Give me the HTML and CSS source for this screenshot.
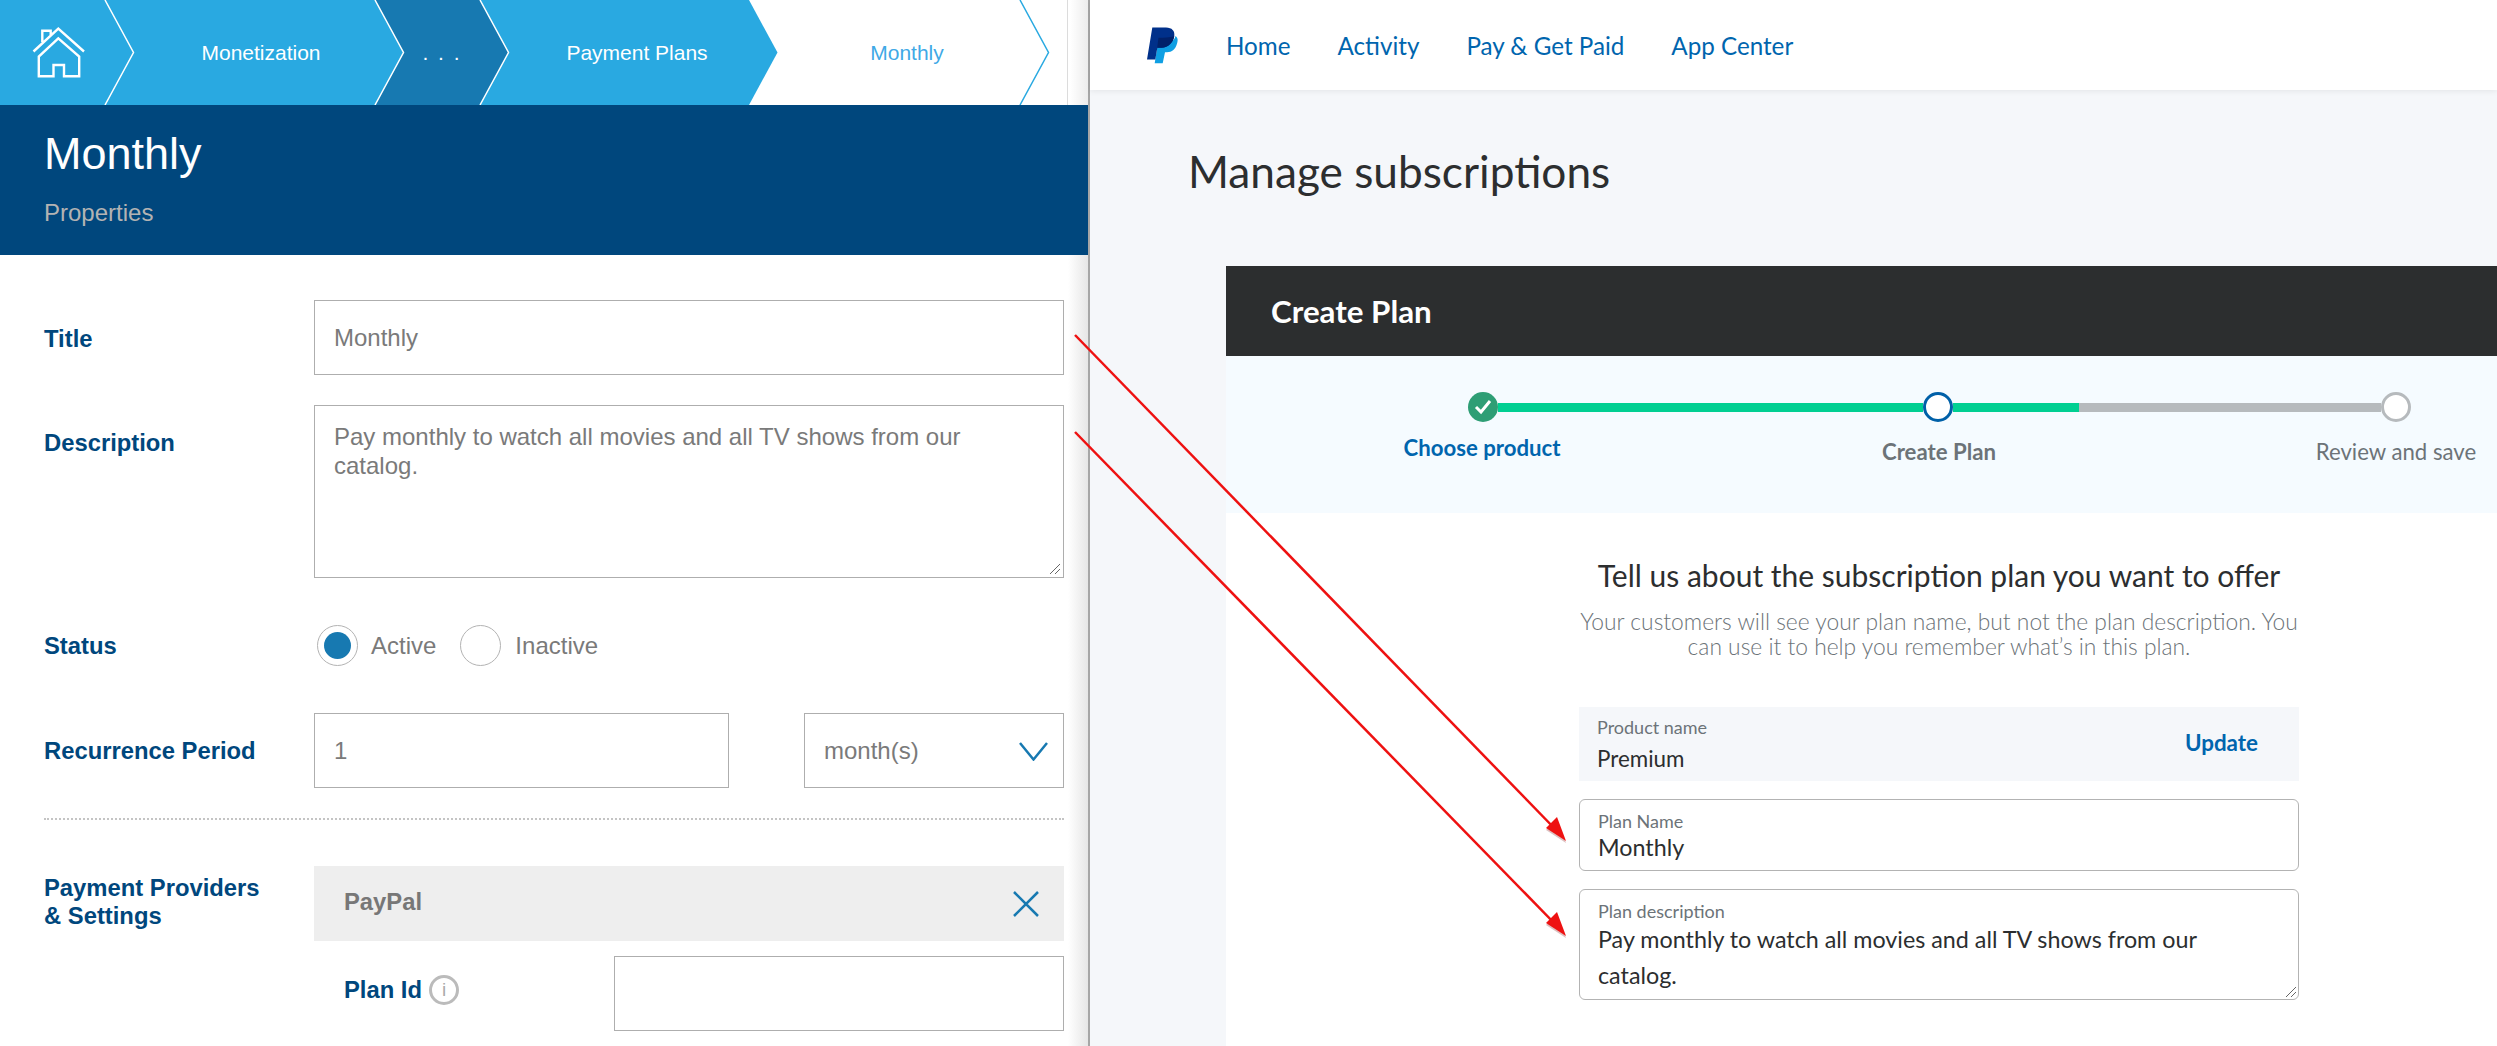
FILE: index.html
```html
<!DOCTYPE html>
<html lang="en">
<head>
<meta charset="utf-8">
<title>Monthly plan</title>
<link rel="stylesheet" href="styles.css">
</head>
<body>
<div class="page">
  <section class="left">
    <nav class="crumbs">
      <svg class="crumb-bg" width="1067" height="105" viewBox="0 0 1067 105">
        <polygon class="c-light" points="0,0 749,0 777.500,52.500 749,105 0,105"/>
        <polygon class="c-dark" points="375,0 480,0 508.500,52.500 480,105 375,105 403.500,52.500"/>
        <polyline class="c-line" points="105,0 133.500,52.500 105,105"/>
        <polyline class="c-line" points="375,0 403.500,52.500 375,105"/>
        <polyline class="c-line" points="480,0 508.500,52.500 480,105"/>
        <polyline class="c-line-blue" points="1020,0 1048.500,52.500 1020,105"/>
      </svg>
      <a class="crumb crumb-home">
        <svg class="home-icon" width="60" height="60" viewBox="29 23 60 60">
          <path d="M33.500 51.500 L58.300 28.500 L84 51.500 M42.300 42 V30.800 H50.700 V36"/>
          <path d="M38.800 56.500 V76.300 H53.500 V65 H64 V76.300 H79.200 V56.500 L58.300 38.300 Z"/>
        </svg>
      </a>
      <a class="crumb crumb-mon">Monetization</a>
      <a class="crumb crumb-dots">. . .</a>
      <a class="crumb crumb-pay">Payment Plans</a>
      <a class="crumb crumb-cur">Monthly</a>
    </nav>
    <header class="head">
      <h1 class="head-title">Monthly</h1>
      <p class="head-sub">Properties</p>
    </header>
    <form class="form">
      <div class="row row-title">
        <div class="label">Title</div>
        <div class="field field-title">Monthly</div>
      </div>
      <div class="row row-desc">
        <div class="label label-desc">Description</div>
        <div class="field field-desc">Pay monthly to watch all movies and all TV shows from our catalog.
          <svg class="grip" width="12" height="12" viewBox="0 0 12 12"><path d="M1 11 L11 1 M6 11 L11 6"/></svg>
        </div>
      </div>
      <div class="row row-status">
        <div class="label">Status</div>
        <div class="radios">
          <span class="radio radio-on"><span class="radio-dot"></span></span>
          <span class="radio-text radio-text-a">Active</span>
          <span class="radio"></span>
          <span class="radio-text">Inactive</span>
        </div>
      </div>
      <div class="row row-rec">
        <div class="label">Recurrence Period</div>
        <div class="rec">
          <div class="field field-num">1</div>
          <div class="field field-select">month(s)
            <svg class="select-chev" width="29" height="19" viewBox="0 0 29 19"><path d="M1 1 L14.500 17.500 L28 1"/></svg>
          </div>
        </div>
      </div>
      <div class="divider"></div>
      <div class="row row-prov">
        <div class="label label-prov">Payment Providers<br>&amp; Settings</div>
        <div class="prov">
          <div class="prov-head">
            <span class="prov-name">PayPal</span>
            <svg class="prov-x" width="26" height="26" viewBox="0 0 26 26"><path d="M1 1 L25 25 M25 1 L1 25"/></svg>
          </div>
          <div class="plan-row">
            <div class="plan-label">Plan Id
              <span class="info">i</span>
            </div>
            <div class="field field-plan"></div>
          </div>
        </div>
      </div>
    </form>
  </section>

  <section class="right">
    <div class="topnav">
      <svg class="pp-logo" width="33" height="37" viewBox="0 -0.500 33 37">
        <path class="pp-light" d="M12 15 H20 C26 15 28.500 12.500 29.500 8.500 C32 10 32 13 31.200 15.500 C29.500 22 26 24.700 21 24.700 H19 L16.700 35.700 H8.700 Z"/>
        <path class="pp-dark" d="M6.300 0 H20 C26 0 29 3.500 28.300 8.500 C27.500 15 22 20.300 15.700 20.300 H11.300 L9.300 32 H1 Z"/>
        <path class="pp-deep" d="M12.500 10.300 C18 10.300 24 10 28.200 8.800 C27.300 15 22 20.300 15.700 20.300 H11.300 L10.800 23 Z"/>
      </svg>
      <a class="nav-link">Home</a>
      <a class="nav-link">Activity</a>
      <a class="nav-link">Pay &amp; Get Paid</a>
      <a class="nav-link">App Center</a>
    </div>
    <h2 class="manage">Manage subscriptions</h2>
    <div class="card">
      <div class="card-head">Create Plan</div>
      <div class="stepper">
        <div class="track">
          <span class="dot dot-done">
            <svg width="20" height="18" viewBox="0 0 20 18"><path d="M3 9 L8 14 L17 3"/></svg>
          </span>
          <span class="seg seg-a"></span>
          <span class="dot dot-cur"></span>
          <span class="seg seg-b"></span>
          <span class="seg seg-c"></span>
          <span class="dot dot-next"></span>
        </div>
        <div class="step-labels">
          <span class="step step-done">Choose product</span>
          <span class="step step-cur">Create Plan</span>
          <span class="step">Review and save</span>
        </div>
      </div>
      <div class="plan-form">
        <h3 class="plan-title">Tell us about the subscription plan you want to offer</h3>
        <p class="plan-note">Your customers will see your plan name, but not the plan description. You can use it to help you remember what’s in this plan.</p>
        <div class="product">
          <div>
            <div class="mini">Product name</div>
            <div class="product-name">Premium</div>
          </div>
          <a class="update">Update</a>
        </div>
        <div class="box box-name">
          <div class="mini">Plan Name</div>
          <div class="box-val">Monthly</div>
        </div>
        <div class="box box-desc">
          <div class="mini">Plan description</div>
          <div class="box-val box-val-desc">Pay monthly to watch all movies and all TV shows from our catalog.</div>
          <svg class="grip grip-r" width="12" height="12" viewBox="0 0 12 12"><path d="M1 11 L11 1 M6 11 L11 6"/></svg>
        </div>
      </div>
    </div>
  </section>

  <svg class="arrows" width="2497" height="1046" viewBox="0 0 2497 1046">
    <path class="arrow-line" d="M1075 335 L1558 832"/>
    <polygon class="arrow-shadow" points="1566,843 1546,830 1557,819"/>
    <polygon class="arrow-head" points="1566,841 1546,828 1557,817"/>
    <path class="arrow-line" d="M1075 432 L1558 927"/>
    <polygon class="arrow-shadow" points="1566,938 1546,925 1557,914"/>
    <polygon class="arrow-head" points="1566,936 1546,923 1557,912"/>
  </svg>
</div>
</body>
</html>
```
FILE: styles.css
```css
* { box-sizing: border-box; }
html, body { margin: 0; padding: 0; background: #fff; }
.page {
  position: relative;
  display: flex;
  width: 2497px;
  height: 1046px;
  overflow: hidden;
}

/* LEFT */
.left {
  display: flex;
  flex-direction: column;
  width: 1088px;
  flex: none;
  font-family: "Liberation Sans", Arial, sans-serif;
  background: #fff;
  height: 100%;
}
.crumbs {
  position: relative;
  display: flex;
  flex: none;
  height: 105px;
  align-items: center;
  font-size: 21px;
  color: #fff;
  background: linear-gradient(90deg, #fff 1070px, #ececec 1088px);
}
.crumb-bg { position: absolute; left: 0; top: 0; border-right: 1px solid #dcdcdc; width: 1068px; }
.c-light { fill: #29a9e1; }
.c-dark { fill: #1779b1; }
.c-line { fill: none; stroke: #fff; stroke-width: 1.5; }
.c-line-blue { fill: none; stroke: #29a9e1; stroke-width: 1.5; }
.crumb { position: relative; display: flex; justify-content: center; align-items: center; height: 100%; flex: none; }
.crumb-home { width: 118px; }
.crumb-mon { width: 286px; }
.crumb-dots { width: 76px; letter-spacing: 2px; }
.crumb-pay { width: 314px; }
.crumb-cur { width: 226px; color: #3fa9e6; }
.home-icon path { fill: none; stroke: #fff; stroke-width: 2.400; }

.head {
  flex: none;
  height: 150px;
  background: #00477d;
  padding: 22px 44px 0;
}
.head-title { margin: 0; font-size: 45px; font-weight: 400; line-height: 54px; color: #fff; }
.head-sub { margin: 18px 0 0; font-size: 24px; line-height: 28px; color: #b3b3b3; }

.form {
  flex: 1;
  padding: 45px 24px 0 44px;
  background: linear-gradient(90deg, #fff 1068px, #e6e6e6 1088px);
}
.row { display: flex; }
.label {
  width: 270px;
  flex: none;
  font-size: 23.800px;
  font-weight: 700;
  color: #00477d;
}
.field {
  border: 1px solid #aeaeae;
  font-size: 24px;
  color: #7a7a7a;
  background: #fff;
  padding: 0 19px;
}
.row-title { height: 75px; align-items: center; }
.row-title .label { padding-top: 2px; }
.field-title { flex: 1; height: 75px; line-height: 73px; }
.row-desc { margin-top: 30px; height: 173px; }
.label-desc { padding-top: 24px; line-height: 28px; }
.field-desc { position: relative; flex: 1; height: 173px; padding-top: 16px; line-height: 29px; }
.grip { position: absolute; right: 2px; bottom: 2px; }
.grip path { fill: none; stroke: #666; stroke-width: 1; }
.row-status { margin-top: 47px; height: 40px; align-items: center; }
.row-status .label { padding-top: 2px; }
.radios { display: flex; align-items: center; padding-left: 3px; font-size: 24px; color: #7a7a7a; }
.radio {
  display: flex;
  align-items: center;
  justify-content: center;
  width: 41px;
  height: 41px;
  border: 1px solid #b3b3b3;
  border-radius: 50%;
  background: #fff;
}
.radio-dot { width: 27px; height: 27px; border-radius: 50%; background: #1779b1; }
.radio-text { margin-left: 14px; padding-top: 2px; }
.radio-text-a { margin-left: 13px; margin-right: 24px; }
.row-rec { margin-top: 48px; height: 75px; align-items: center; }
.rec { flex: 1; display: flex; justify-content: space-between; }
.field-num { width: 415px; height: 75px; line-height: 73px; }
.field-select { position: relative; width: 260px; height: 75px; line-height: 73px; }
.select-chev { position: absolute; right: 15px; top: 28px; }
.select-chev path { fill: none; stroke: #1779b1; stroke-width: 2.500; }
.divider { margin-top: 30px; border-top: 2px dotted #c4c4c4; height: 2px; }
.row-prov { margin-top: 46px; }
.label-prov { padding-top: 8px; line-height: 28px; }
.prov { flex: 1; border-bottom: 1px solid #d0d0d0; padding-bottom: 15px; }
.prov-head {
  display: flex;
  justify-content: space-between;
  align-items: center;
  height: 75px;
  padding: 0 25px 0 30px;
  background: #eee;
  font-size: 23.800px;
  font-weight: 700;
  color: #777;
}
.prov-name { padding-bottom: 3px; }
.prov-x path { fill: none; stroke: #1779b1; stroke-width: 2.500; }
.plan-row { display: flex; margin-top: 15px; height: 75px; }
.plan-label {
  display: flex;
  align-items: center;
  gap: 7px;
  width: 300px;
  flex: none;
  padding: 0 0 7px 30px;
  font-size: 23.800px;
  font-weight: 700;
  color: #00477d;
}
.info {
  display: flex;
  align-items: center;
  justify-content: center;
  width: 30px;
  height: 30px;
  border: 3px solid #bbb;
  border-radius: 50%;
  font-size: 19px;
  font-weight: 400;
  color: #aaa;
}
.field-plan { flex: 1; height: 75px; }

/* RIGHT */
.right {
  flex: 1;
  min-width: 0;
  background: #f5f7fa;
  border-left: 2px solid #a6a6a6;
  font-family: "Lato", "Noto Sans", sans-serif;
  color: #2c2e2f;
  height: 100%;
}
.topnav {
  display: flex;
  align-items: center;
  height: 90px;
  padding-left: 56px;
  background: #fff;
  box-shadow: 0 1px 6px rgba(0, 0, 0, 0.08);
}
.pp-logo { margin-right: 47px; }
.pp-light { fill: #0f9fe3; }
.pp-dark { fill: #00308a; }
.pp-deep { fill: #012169; }
.nav-link { margin-right: 47px; font-size: 24.200px; color: #0065ae; }
.manage {
  margin: 0;
  padding: 52px 0 0 98px;
  height: 176px;
  font-size: 44.200px;
  font-weight: 400;
  line-height: 58px;
  color: #2c2e2f;
}
.card { margin-left: 136px; background: #fff; height: 780px; }
.card-head {
  height: 90px;
  padding-left: 45px;
  background: #2c2e2f;
  color: #fff;
  font-size: 31.300px;
  font-weight: 700;
  line-height: 90px;
}
.stepper { height: 157px; padding-top: 36px; background: #f5fbff; }
.track { display: flex; align-items: center; margin-left: 242px; height: 30px; width: 943px; }
.dot {
  flex: none;
  display: flex;
  align-items: center;
  justify-content: center;
  width: 30px;
  height: 30px;
  border-radius: 50%;
  background: #fff;
  border: 3px solid #0060a8;
}
.dot-done { background: #2e9e75; border: 0; }
.dot-done path { fill: none; stroke: #fff; stroke-width: 3; }
.dot-next { border-color: #b6babd; }
.seg { height: 9px; flex: none; }
.seg-a { width: 425px; background: #00cf92; }
.seg-b { width: 126px; background: #00cf92; }
.seg-c { width: 302px; background: #b6babd; }
.step-labels { display: flex; margin: 16px 0 0 156px; gap: 257px; font-size: 22.200px; color: #6c7378; }
.step { width: 200px; text-align: center; }
.step-done { color: #0065ae; font-weight: 700; margin-top: -4px; }
.step-cur { font-weight: 700; }
.plan-form { width: 720px; margin-left: 353px; padding-top: 44px; }
.plan-title { margin: 0; text-align: center; font-size: 30px; font-weight: 400; line-height: 36px; color: #2c2e2f; white-space: nowrap; }
.plan-note { margin: 16px -2px 0; text-align: center; font-size: 22.800px; font-weight: 300; line-height: 25px; color: #6c7378; }
.product {
  display: flex;
  justify-content: space-between;
  align-items: center;
  height: 74px;
  margin-top: 48px;
  padding: 0 41px 0 18px;
  background: #f5f7fa;
}
.mini { font-size: 18px; line-height: 22px; color: #6c7378; }
.product-name { margin-top: 8px; font-size: 22.400px; line-height: 26px; }
.update { font-size: 22.400px; font-weight: 700; color: #0065ae; padding-bottom: 3px; }
.box { position: relative; border: 1px solid #b3b3b3; border-radius: 6px; padding: 10px 17px 0 18px; background: #fff; }
.box-name { height: 72px; margin-top: 18px; }
.box-desc { height: 111px; margin-top: 18px; }
.box-val { font-size: 23.300px; line-height: 30px; }
.box-val-desc { line-height: 36px; margin-top: -1px; padding-right: 40px; }
.box-name .box-val { margin-top: 0; }
.grip-r { right: 1px; bottom: 1px; }

.arrows { position: absolute; left: 0; top: 0; pointer-events: none; }
.arrow-line { fill: none; stroke: #ee1111; stroke-width: 2.500; }
.arrow-head { fill: #ee1111; }
.arrow-shadow { fill: rgba(120, 0, 0, 0.25); }
```
